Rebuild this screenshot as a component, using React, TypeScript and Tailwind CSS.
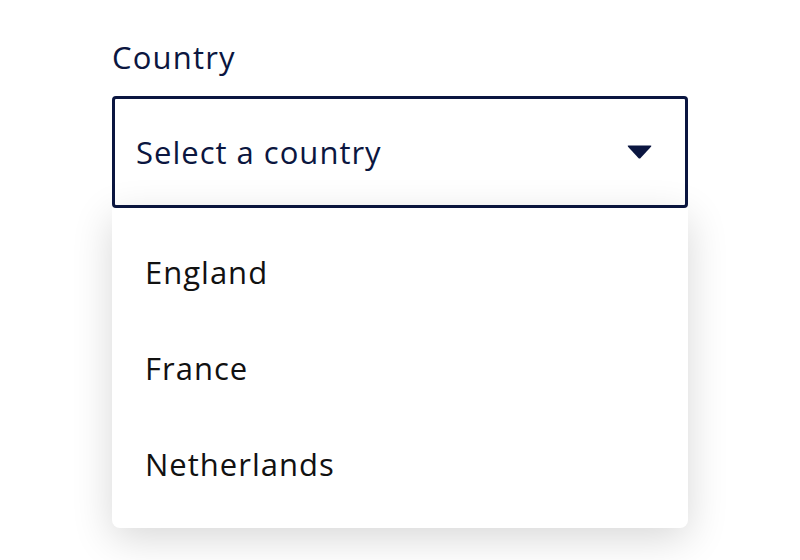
import React from "react";

export default function App() {
  const items = ["England", "France", "Netherlands"];
  return (
    <div
      className="w-[800px] h-[560px] bg-white overflow-hidden"
      style={{ fontFamily: '"Open Sans", "Noto Sans", sans-serif' }}
    >
      <div className="ml-[112px] w-[576px] pt-[37px]">
        <label className="block text-[31px] tracking-[1.2px] leading-[40px] text-[#0b1640] mb-[19px]">
          Country
        </label>
        <div className="h-[112px] border-[3px] border-[#0b1640] rounded-[4px] flex items-center justify-between pl-[21px] pr-[33px]">
          <span className="text-[31px] tracking-[1px] text-[#0b1640]">Select a country</span>
          <svg width="25" height="14" viewBox="0 0 25 14">
            <path d="M1.5 0.5 H23.5 Q25 0.5 24 1.7 L13.6 13 Q12.5 14 11.4 13 L1 1.7 Q0 0.5 1.5 0.5 Z" fill="#0b1640" />
          </svg>
        </div>
        <div className="relative z-10 bg-white rounded-b-[8px] py-4 shadow-[0_10px_40px_rgba(0,0,0,0.16)]">
          {items.map((it) => (
            <div key={it} className="h-[96px] flex items-center pl-[33px] text-[31px] tracking-[1px] text-[#111111]">
              {it}
            </div>
          ))}
        </div>
      </div>
    </div>
  );
}
